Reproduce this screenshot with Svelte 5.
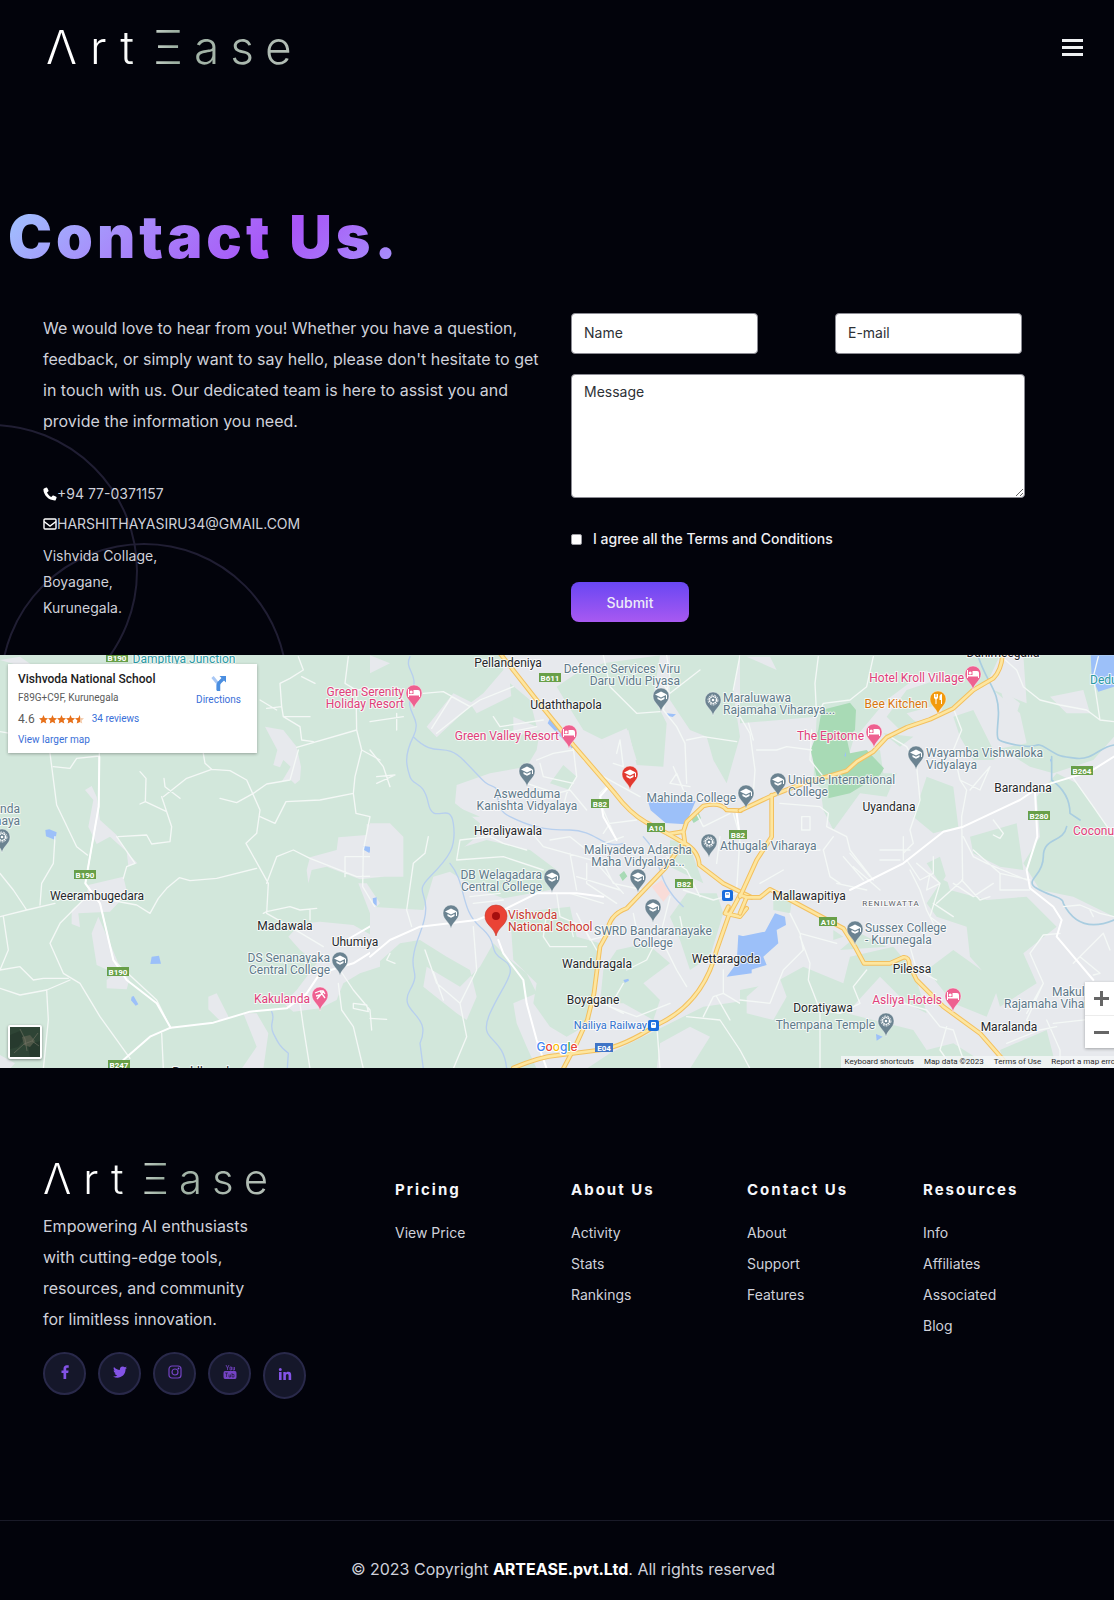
<script>
  const columns = [
    { title: 'Pricing', links: ['View Price'] },
    { title: 'About Us', links: ['Activity', 'Stats', 'Rankings'] },
    { title: 'Contact Us', links: ['About', 'Support', 'Features'] },
    { title: 'Resources', links: ['Info', 'Affiliates', 'Associated', 'Blog'] }
  ];

  // Map labels: kind, x, vertical centre of the first line, anchor, lines
  const labels = [
    ['teal', 184, 4, 'middle', 'Dampitiya Junction'],
    ['town', 97, 241, 'middle', 'Weerambugedara'],
    ['town', 285, 271, 'middle', 'Madawala'],
    ['town', 355, 287, 'middle', 'Uhumiya'],
    ['slate', 330, 303, 'end', 'DS Senanayaka', 'Central College'],
    ['pink', 310, 344, 'end', 'Kakulanda'],
    ['pink', 404, 37, 'end', 'Green Serenity', 'Holiday Resort'],
    ['slate', 20, 154, 'end', 'anda', 'naya'],
    ['town', 204, 417, 'middle', 'Buddhagala'],
    ['town', 508, 8, 'middle', 'Pellandeniya'],
    ['slate', 680, 14, 'end', 'Defence Services Viru', 'Daru Vidu Piyasa'],
    ['town', 566, 50, 'middle', 'Udaththapola'],
    ['pink', 559, 81, 'end', 'Green Valley Resort'],
    ['slate', 527, 139, 'middle', 'Aswedduma', 'Kanishta Vidyalaya'],
    ['town', 508, 176, 'middle', 'Heraliyawala'],
    ['slate', 736, 143, 'end', 'Mahinda College'],
    ['slate', 638, 195, 'middle', 'Maliyadeva Adarsha', 'Maha Vidyalaya...'],
    ['slate', 542, 220, 'end', 'DB Welagadara', 'Central College'],
    ['red', 508, 260, 'start', 'Vishvoda', 'National School'],
    ['slate', 653, 276, 'middle', 'SWRD Bandaranayake', 'College'],
    ['town', 597, 309, 'middle', 'Wanduragala'],
    ['town', 726, 304, 'middle', 'Wettaragoda'],
    ['town', 593, 345, 'middle', 'Boyagane'],
    ['blue', 647, 370, 'end', 'Nailiya Railway'],
    ['slate', 720, 191, 'start', 'Athugala Viharaya'],
    ['slate', 723, 43, 'start', 'Maraluwawa', 'Rajamaha Viharaya...'],
    ['pink', 964, 23, 'end', 'Hotel Kroll Village'],
    ['orange', 928, 49, 'end', 'Bee Kitchen'],
    ['pink', 864, 81, 'end', 'The Epitome'],
    ['slate', 926, 98, 'start', 'Wayamba Vishwaloka', 'Vidyalaya'],
    ['slate', 788, 125, 'start', 'Unique International', 'College'],
    ['town', 889, 152, 'middle', 'Uyandana'],
    ['town', 1023, 133, 'middle', 'Barandana'],
    ['pink', 1073, 176, 'start', 'Coconut'],
    ['teal', 1090, 25, 'start', 'Deduru'],
    ['town', 809, 241, 'middle', 'Mallawapitiya'],
    ['area', 891, 247, 'middle', 'RENILWATTA'],
    ['slate', 865, 273, 'start', 'Sussex College', '- Kurunegala'],
    ['town', 912, 314, 'middle', 'Pilessa'],
    ['pink', 942, 345, 'end', 'Asliya Hotels'],
    ['town', 823, 353, 'middle', 'Doratiyawa'],
    ['slate', 875, 370, 'end', 'Thempana Temple'],
    ['town', 1009, 372, 'middle', 'Maralanda'],
    ['slate', 1052, 337, 'start', 'Makulana'],
    ['slate', 1004, 349, 'start', 'Rajamaha Viharaya'],
    ['town', 1003, -2, 'middle', 'Dahimeegalla']
  ].map(([kind, x, y, anchor, ...lines]) => ({ kind, x, y, anchor, lines }));

  const pins = [
    ['temple', 2, 182], ['school', 340, 305], ['food', 320, 340, 'pink'],
    ['bed', 414, 38, 'pink'], ['bed', 569, 78, 'pink'], ['school', 527, 116],
    ['school', 661, 41], ['temple', 713, 45], ['school', 630, 119, 'red'],
    ['school', 746, 138], ['temple', 709, 187], ['school', 552, 222],
    ['school', 638, 222], ['school', 653, 252], ['school', 451, 258],
    ['bed', 973, 19, 'pink'], ['fork', 938, 44, 'orange'], ['bed', 874, 77, 'pink'],
    ['school', 916, 99], ['school', 778, 126], ['school', 855, 274],
    ['bed', 953, 341, 'pink'], ['temple', 886, 366]
  ].map(([icon, x, y, tone = 'slate']) => ({ icon, x, y, tone }));

  const shields = [
    ['B190', 117, 3], ['B190', 85, 220], ['B190', 118, 317], ['B247', 119, 410],
    ['B611', 550, 23], ['B82', 600, 149], ['A10', 656, 173], ['B82', 738, 180],
    ['B82', 684, 229], ['E04', 604, 393], ['B264', 1082, 116], ['B280', 1039, 161],
    ['A10', 828, 267]
  ];

  const stations = [[727, 240], [653, 370]];

  let name = $state('');
  let email = $state('');
  let message = $state('');
  let agreed = $state(false);
</script>

<div class="page">
  <header class="topbar">
    <a class="logo" href="#home" aria-label="ArtEase"><span>Λrt</span><span class="tail">Ξase</span></a>
    <button class="menu" type="button" aria-label="Open menu">
      <span></span><span></span><span></span>
    </button>
  </header>

  <main>
    <section class="contact">
      <div class="rings" aria-hidden="true"><i class="ring one"></i><i class="ring two"></i></div>
      <h1>Contact Us.</h1>
      <div class="halves">
        <div class="intro">
          <p>We would love to hear from you! Whether you have a question, feedback, or simply want to say hello, please don't hesitate to get in touch with us. Our dedicated team is here to assist you and provide the information you need.</p>
          <address>
            <a href="tel:+94770371157">
              <svg viewBox="0 0 14 14" width="14" height="14" aria-hidden="true"><path fill="#fff" d="M1 1.6 3.2.5c.5-.2.9 0 1.1.4l1.2 2.6c.2.4 0 .8-.3 1L4 5.500c.8 1.900 2.300 3.500 4.300 4.500l1.200-1.300c.3-.3.7-.4 1-.2l2.700 1.300c.4.2.5.6.4 1l-.9 2.100c-.1.4-.5.7-1 .6C5.600 13.300.700 8.400.400 2.600c0-.4.200-.8.600-1z"/></svg>
              +94 77-0371157
            </a>
            <a href="mailto:harshithayasiru34@gmail.com">
              <svg viewBox="0 0 14 14" width="14" height="14" aria-hidden="true"><rect x="1" y="2" width="12" height="10" rx="1" fill="none" stroke="#fff" stroke-width="1.400"/><path d="m1 4.500 6 4.500 6-4.500" fill="none" stroke="#fff" stroke-width="1.400"/></svg>
              HARSHITHAYASIRU34@GMAIL.COM
            </a>
            <div class="street">Vishvida Collage,<br />Boyagane,<br />Kurunegala.</div>
          </address>
        </div>

        <form onsubmit={(e) => e.preventDefault()}>
          <div class="pair">
            <input type="text" placeholder="Name" aria-label="Name" bind:value={name} />
            <input type="email" placeholder="E-mail" aria-label="E-mail" bind:value={email} />
          </div>
          <textarea placeholder="Message" aria-label="Message" bind:value={message}></textarea>
          <label class="agree"><input type="checkbox" bind:checked={agreed} />I agree all the Terms and Conditions</label>
          <button class="submit" type="submit">Submit</button>
        </form>
      </div>
    </section>

    <section class="map" aria-label="Map">
      <svg class="canvas" viewBox="0 0 1114 413" preserveAspectRatio="xMidYMid slice">
        <rect width="1114" height="413" fill="#d2e7db" />
        <g transform="translate(0 -5) scale(.33333)">
          <!-- western sheet -->
          <g>
            <g class="urban">
              <path d="M795 230 850 240 890 290 903 350 900 390 885 402 870 388 845 395 872 350 850 330 840 352 820 345 832 300Z" />
              <path d="M255 420 275 408 290 440 300 510 350 555 375 600 412 640 385 648 380 605 330 560 290 582 265 530 280 450Z" />
              <path d="M265 705 370 680 382 730 330 785 235 790 240 832 215 822 215 780 260 740Z" />
              <path d="M275 850 295 800 330 880 355 940 388 990 380 1018 320 1015 320 990 345 970 290 945Z" />
              <path d="M930 622 1010 600 1015 562 1100 555 1100 522 1150 530V680L1080 688 980 650 935 660 925 700 920 660Z" />
              <path d="M865 860 900 822 960 815 1060 825 1140 870V950L1080 970 1030 1000 1010 1050 960 1075 880 1085 850 1060 890 1020 950 940 900 900Z" />
              <path d="M625 1040 650 1030 688 1105 660 1112 625 1078ZM730 1090 770 1090 805 1150 790 1256H725L770 1190ZM0 30 60 20 110 55 70 50ZM0 1215 45 1240 30 1256H0Z" />
              <path d="M1075 700 1100 700 1140 760 1110 790Z" />
            </g>
            <g class="water">
              <path d="m136 540 12-2 22 9-4 23-28-11zM455 920l22-3 6 24-32 1zM395 1040l6-2 14 25-8 4-14-16zM1090 588l24 3-6 18-16-9zM1118 745l12-3v26l-10-8z" />
            </g>
            <g class="stream"><path d="M815 1085C828 1110 805 1120 820 1150S840 1190 865 1210L862 1256" /></g>
            <g class="lane">
              <path d="M0 245 60 255M150 310 170 465 230 590 262 615M298 310 296 470 256 700 300 760 340 930 470 1050 512 1135M160 350 210 355 230 325 298 318M610 310 615 340 635 358 M490 440 560 385 635 358 690 362 740 390 780 480 770 550 738 580 805 700 800 790 870 830 970 890M485 440 500 485 515 530 510 575 455 582 440 555 355 560M420 365 438 385 436 455 420 462M436 455 500 485M492 385 495 410 540 445M660 445 710 458 760 430 800 402 870 390 895 300M780 500 825 520 858 455 960 450 1060 430 1065 380 1085 300 1070 240 890 292M1070 240 1068 120 1035 100 1045 20M895 20 910 60 870 85 840 100 845 170 800 175 M905 80 945 100M845 170 850 200 930 200M780 150 830 180M850 200 900 230 905 270 940 275M1068 120 1140 115M1085 300 1140 330M1060 430 1068 490 1110 500 1090 600 1088 710 1130 780M800 700 830 620 880 600 930 625 1070 680 1140 678M1035 680V620H1140M380 650 405 640 350 560M370 685 380 650M770 655 650 685 570 692 538 683 500 715 475 745 450 790 410 765 330 750M165 760 80 780 0 800M80 780 40 720 0 670M120 765 125 700 160 640 165 560M10 800 25 900 0 960 60 950 100 990 130 985 205 985M255 745 180 820 150 880 190 970 240 1000 300 1100 390 1225M210 990 140 1020 60 1035 0 1015M140 1020 145 1110 130 1256M790 790 800 785 870 770 900 780 950 775M930 780 930 810M485 1150 490 1256M900 1060 910 1130 930 1256M1015 1000 1025 1080 1060 1130 1090 1256M1060 1060 1100 1065 1105 1085 1060 1075ZM1020 960 1060 1020 1110 1080 1115 1140" />
            </g>
            <g class="road">
              <path d="M298 320 296 470 256 700 300 760 340 930 380 990 470 1060 512 1133M370 1230 450 1160 512 1133 640 1118 750 1085 860 1075 920 1030 960 970 1060 940 1140 890M1040 870 1140 812" />
            </g>
          </g>

          <!-- central sheet -->
          <g transform="translate(1110 0)">
            <g class="urban">
              <path d="M395 16 400 60 340 130 300 160 320 190 440 130 480 180 430 200 430 260 510 240 500 300 470 350 360 370 260 405 255 460 330 520 320 560 260 610 400 600 540 680 540 720 400 745 310 710 240 665 190 680 160 780 0 770V960L90 880 150 870 230 920 300 960 320 1040 290 1110 260 1090 160 1010 170 950 270 1010 330 950 370 880 420 930 470 970 500 1030 430 1060 440 1120 470 1190 500 1256H2232V16Z" />
              <path d="M170 230 250 130 310 160 200 262ZM0 520 60 520 100 560 100 680 0 680ZM0 16 60 40 0 70Z" />
            </g>
            <g class="land">
              <path d="M620 70 700 40 870 16 850 140 890 220 880 350 800 345 775 240 700 270 640 240 590 160 560 110Z" />
              <path d="M900 16H1110L1090 130 1110 260 1070 400 1030 330 1010 260 960 240 900 150Z" />
              <path d="M420 100 480 150 500 230 430 200ZM580 345 620 380 600 420 540 400ZM260 470 330 500 260 500Z" />
              <path d="M420 790 600 770 620 860 690 880 660 1120 590 1160 540 1130 490 1060 500 1000 430 930Z" />
              <path d="M740 900 830 880 900 940 820 1000 870 1050 850 1110 760 1060 690 1060 700 960Z" />
              <path d="M950 730 1040 730 1060 790 1020 920 960 960 930 870 900 800Z" />
              <path d="M650 1256 720 1210 860 1140 1000 1070 1140 1050V1256ZM250 600 350 570 480 600 560 660 520 700 430 640 300 640Z" />
              <path d="M900 570 960 580 970 620 1000 700 900 650Z" />
            </g>
            <g class="urban"><path d="M870 1180 960 1130 1020 1160 960 1256H860ZM690 270 770 235 800 330 720 330Z" /></g>
            <path fill="#a8dab5" d="m960 500 25-15 8 20-22 14zM748 675l14-12 10 16-14 14z" />
            <path fill="#f9dcd8" d="m845 710 30-20 25 40-20 25z" />
            <g class="water">
              <path d="m832 448 30 5h115l-30 70-60-4-45-38zM540 205l20 10 60 75-15 5-72-75zM890 190l28 3-10 8-16-4zM1105 855l40 10v105l-75 10 30-40zM760 990l15-4 2 6-12 6z" />
            </g>
            <g class="stream">
              <path d="M120 20C100 60 150 70 125 130S160 200 130 260 110 350 120 380 160 390 175 460 240 450 250 520 240 620 180 680 200 720 150 850 160 950 120 1020 190 1090 150 1180L160 1256M130 260C200 330 220 270 280 330S340 400 370 410 360 470 420 500 520 540 600 540 700 600 760 580M240 640C290 700 270 780 330 830S350 900 400 930 400 1000 360 1090 400 1150 410 1256M820 560C880 620 850 690 940 770" />
            </g>
            <g class="lane">
              <path d="M160 130 220 125 300 170 330 150 430 110M185 235 245 140 300 170 200 250M80 190V240M0 215 100 200M20 400 75 375 20 380M0 300 40 350 60 410M175 560 165 610 130 640 110 780 125 830M370 200 390 230 520 210M400 250 500 230M700 16 720 110 800 190 870 185M890 16 900 80 880 180 920 230 945 280 950 400M950 270 1000 260 1100 275M1110 16 1090 120M1100 130 1130 200 1150 270M870 90 900 130 990 60M500 330 550 310 610 300M610 295 620 380 590 430 580 470M510 340 520 380 610 400M470 400 560 430 600 420 650 480M715 405 690 430 700 480 735 560M640 330 700 380 810 440M740 310 750 270 760 350 730 340M700 550 720 520 800 510M540 570 600 560 650 600 760 560M470 530 520 590 700 640 730 700 820 720M600 610 620 720M650 640 650 700 740 760M680 640 760 730M620 680 750 720M600 730 700 760M560 730 570 800 640 830 680 900M470 600 400 580 360 560 270 570 260 630 400 620 520 660M390 730 300 740M310 760 400 750M520 860 540 890 650 890M530 790 520 860M620 790 660 870 700 860M790 790 800 840 870 840M900 740 870 860 920 960 950 1010M940 720 1030 750 1100 730M890 620 950 660 990 740M860 870 830 930 770 960M760 1000 720 1070 800 1100 900 1060M700 1060 760 1090M1000 1100 1030 1040 1060 1030 1060 960M1060 1030 1110 1060 1140 1030M1040 1040 1080 1110M860 1120 870 1256M950 1100 1050 1110 1110 1200M165 900 200 1000 270 1060 320 960M60 910 50 930 75 940M190 965 220 1050M270 1060 290 1160 250 1256M0 1105 50 1108M310 830 320 960M980 490 1000 530 1080 490M1090 490 1110 560 1100 720M1050 560 1040 640M960 410 900 400 920 370 940 420 910 350M930 800 940 850M600 820 610 860" />
            </g>
            <g class="road">
              <path d="M0 920 60 870 150 830 320 810 410 775 500 730 620 730 700 740M385 870 400 910 460 990 470 1060 500 1170 530 1256M720 405 690 440 700 500 740 570M1100 490 1110 560" />
            </g>
            {#each ['casing', 'core'] as layer}
              <g class={layer}>
                <path d="M390 10 500 150 610 285 735 430Q780 490 830 518L895 552 940 578Q985 600 988 645L1060 700 1145 742" />
                <path d="M895 552 940 545 950 515 1000 468Q1050 455 1070 480L1112 482M940 545 945 580" />
                <path d="M940 578 885 655 770 775Q715 795 712 850L690 890 672 1030 652 1110 620 1180 580 1256" />
                <path d="M430 1254Q510 1220 560 1216L690 1200Q760 1190 860 1125 1000 1060 1040 900L1075 800 1110 735M1075 770 1065 790 1110 800 1130 775" />
              </g>
            {/each}
          </g>

          <!-- eastern sheet -->
          <g transform="translate(2220 0)">
            <g class="land">
              <path d="M0 16H400L780 16 750 80 700 120 600 200 480 240 440 200 500 120 590 90 560 60 440 150 340 270 290 440 220 400 230 200 0 220Z" />
              <path d="M850 16H1122V260L1060 330 940 370 870 350 790 300 760 330 700 330 660 260 640 200 700 180 760 300 860 280 840 190 760 120 860 160Z" />
              <path d="M230 330 420 300 430 370 470 370 440 440 360 430 280 540 250 480Z" />
              <path d="M560 380 640 410 655 530 580 550 520 500 540 440ZM950 370 1010 400 1122 560V800L1000 740 900 720 850 640 900 560 890 440Z" />
              <path d="M690 560 830 520 850 660 780 650 700 610ZM430 250 520 260 480 290Z" />
              <path d="M560 760 600 700 560 640 600 620 630 720 740 750 860 740 950 830 850 910 890 1000 780 1070 760 1000 690 920 680 830 590 800ZM640 900 780 1000 740 1100 640 1060 560 960Z" />
              <path d="M0 1020 100 1000 190 950 310 1000 330 920 460 890 520 960 560 1090 500 1060 420 980 320 1090 520 1140 560 1200 640 1180 760 1256H0ZM780 1200 920 1140 950 1256H800ZM300 900 360 850 440 890Z" />
              <path d="M100 740 160 720 150 790 100 780ZM280 840 310 860 280 870Z" />
            </g>
            <g class="urban"><path d="M780 110 840 160 830 190 790 150ZM500 190 610 160 590 250 520 210ZM610 690 660 610 720 740ZM20 1040 110 960 140 1040 100 1110 20 1090ZM930 140 1030 120 1050 190 980 190ZM20 20H90L110 60Z" /></g>
            <path fill="#a8dab5" d="M245 180 330 158 348 180 345 240 320 265 330 310 380 300 432 355 420 375 330 430 265 445 265 390 230 380 212 300 235 240Z" />
            <g class="water">
              <path d="M1052 16H1122V110L1075 125 1055 80ZM105 790 135 800 138 825 110 840 115 880 70 920 80 945 0 970V860L75 845ZM408 1152 428 1160 410 1172ZM930 330 936 322V344ZM318 305V320L313 318Z" />
            </g>
            <g class="stream wide">
              <path d="M715 20C740 100 780 120 775 200S760 270 830 285 880 270 920 295 960 320 1010 325 1080 290 1122 285M935 320 935 390Q990 430 990 490L1020 510M980 530C970 580 910 560 910 620S850 690 890 715 970 740 970 760C1000 820 1050 840 1122 810" />
            </g>
            <g class="lane">
              <path d="M235 20 225 100 230 200 250 160 330 150 380 110 400 20M0 200 30 250 45 360 40 430M50 300 110 300 140 290 215 300M215 240 210 330 250 380M780 16 830 60 850 110 900 150 960 165 1040 180 1080 210 1122 215M1075 20 1060 80 1080 210M640 175 665 240 640 300 660 390 680 420 665 500 668 690 590 760M450 260 500 290 530 350 540 450 510 540 520 580 490 610M660 390 720 420 750 350 690 420M185 500H210V540H185ZM120 460 240 470 265 490 260 530 320 560 330 600 400 690M280 560 250 600 270 680 300 700M140 580 180 600 240 600M60 700 130 660M310 620 370 690M330 610 390 680M290 700 380 720M340 650 420 720M420 600H510M490 560 490 630M420 630H480M500 630 540 690 580 670 580 620M530 640 600 700 570 800 610 830M640 700 700 740 760 700M580 760 640 800M670 560 700 620 740 640 860 690M700 600 780 670 870 690M510 660 540 720 560 780 580 820M665 690 720 750 750 740M780 670 780 720 870 720M760 510 790 550 780 565 760 555M1000 385 1060 470 1122 560M970 770 1020 765 1080 790 1122 800M1060 800 1050 780M960 850 910 855 870 910 910 1000 860 1090M1020 920 1080 970 1060 975M1000 940 1090 850 1110 900M180 850 190 900 130 960 90 1060 0 1050M180 860 210 940 205 990 240 1080 240 1256M150 790 180 850 290 880M380 960 340 1010 360 1060 300 1090 240 1080M510 890 530 960 590 990M490 1060 560 1080 600 1130 640 1140 660 1200 680 1256M620 1130 600 1200 640 1256M800 1180 900 1140 950 1130M890 1140 860 1110 910 1000M920 1110 960 1200 960 1256M940 1120 1122 1100M0 1200 30 1256M570 670 560 720 600 700" />
            </g>
            <g class="road">
              <path d="M1122 320 1050 365 900 410 840 450 670 530 610 545 490 640 330 720M885 425 892 560 860 660 870 715 940 770 965 810 950 860 1060 990" />
            </g>
            {#each ['casing', 'core'] as layer}
              <g class={layer}>
                <path d="M0 482 100 435 190 400 260 380 320 362 350 335 400 305 440 262 500 232 570 208 640 175 700 120 760 85Q785 60 788 10" />
                <path d="M0 740 50 630 95 560V435" />
                <path d="M0 790 20 742 60 742 90 718 160 755 310 835 345 890 372 940 450 940 490 922Q508 920 508 945L530 990 610 1070 720 1150 790 1230M0 735 20 742" />
              </g>
            {/each}
          </g>
        </g>

        {#each shields as [code, x, y]}
          <g transform="translate({x} {y})">
            <rect x={code.length > 3 ? -11 : -9} y="-5" width={code.length > 3 ? 22 : 18} height="9" fill={code === 'E04' ? '#3f74c6' : '#689f48'} />
            <text class="shield" y="3" text-anchor="middle">{code}</text>
          </g>
        {/each}

        {#each stations as [x, y]}
          <g transform="translate({x} {y})">
            <rect x="-5" y="-5" width="11" height="11" rx="2" fill="#1a6ddd" />
            <rect x="-2" y="-3" width="5" height="6" rx="1" fill="#fff" />
            <path d="M-1-1H2M-2 4-1 3M3 4 2 3" stroke="#1a6ddd" />
          </g>
        {/each}

        {#each labels as label}
          <text class="label {label.kind}" text-anchor={label.anchor}>
            {#each label.lines as line, i}
              <tspan x={label.x} y={label.y + 4 + i * 12}>{line}</tspan>
            {/each}
          </text>
        {/each}

        {#each pins as pin}
          <g class="pin {pin.tone}" transform="translate({pin.x} {pin.y})">
            <path class="drop" d="M0 16C-1 9-8 7-8 0A8 8 0 1 1 8 0C8 7 1 9 0 16Z" />
            {#if pin.icon === 'school'}
              <path fill="#fff" d="M0-4.500 6-1.500 0 1.500-6-1.500ZM-3.500 1V3L0 4.800 3.500 3V1L0 2.800ZM5-1H6V3H5Z" />
            {:else if pin.icon === 'bed'}
              <path fill="#fff" d="M-6-4H-5V1H-.5V-3H4Q6-3 6-1V4H5V2.500H-5V4H-6Z" /><circle cx="-2.800" cy="-1" r="1.500" fill="#fff" />
            {:else if pin.icon === 'fork'}
              <path fill="#fff" d="M-4-5H-3V-2H-2.500V-5H-1.500V-2H-1V-5H0V-1L-1.500.500V5H-2.500V.500L-4-1ZM4-5V5H3V1H1.500V-3Q2-5 4-5Z" />
            {:else if pin.icon === 'food'}
              <path fill="none" stroke="#fff" stroke-width="1.300" d="M-5-2 0-4 5 3M-4 1 0 0M-3 4 4-4M0-4H3L5-1" />
            {:else}
              <circle r="3.500" fill="none" stroke="#fff" stroke-width="1.600" stroke-dasharray="1.600 .6" /><circle r="5" fill="none" stroke="#fff" stroke-width=".8" stroke-dasharray="2 1" /><circle r="1.300" fill="#fff" />
            {/if}
          </g>
        {/each}

        <g transform="translate(496 262)">
          <path d="M0 19C-2 10-11 8-11-1A11 11 0 1 1 11-1C11 8 2 10 0 19Z" fill="#ea4335" stroke="#c5372c" stroke-width=".6" />
          <circle cy="-1" r="4" fill="#a50e0e" />
        </g>

        <text class="google" x="557" y="396" text-anchor="middle"><tspan fill="#4285f4">G</tspan><tspan fill="#ea4335">o</tspan><tspan fill="#fbbc05">o</tspan><tspan fill="#4285f4">g</tspan><tspan fill="#34a853">l</tspan><tspan fill="#ea4335">e</tspan></text>
      </svg>

      <div class="place">
        <div class="facts">
          <strong>Vishvoda National School</strong>
          <span class="where">F89G+C9F, Kurunegala</span>
          <span class="rating">
            <b>4.6</b>
            <svg width="45" height="9" viewBox="0 0 45 9" aria-label="4.6 stars">
              {#each [0, 9, 18, 27] as x}
                <path transform="translate({x} 0)" fill="#e7711b" d="M4.500 0 5.800 3 9 3.300 6.600 5.400 7.300 8.600 4.500 6.900 1.700 8.600 2.400 5.400 0 3.300 3.200 3Z" />
              {/each}
              <path transform="translate(36 0)" fill="#f3c9a8" d="M4.500 0 5.800 3 9 3.300 6.600 5.400 7.300 8.600 4.500 6.900Z" />
              <path transform="translate(36 0)" fill="#e7711b" d="M5 0V7L1.700 8.600 2.400 5.400 0 3.300 3.200 3Z" />
            </svg>
            <a href="#reviews">34 reviews</a>
          </span>
          <a href="#map">View larger map</a>
        </div>
        <a class="directions" href="#directions">
          <svg width="16" height="16" viewBox="0 0 16 16" aria-hidden="true"><path d="M1.500 2 6.500 8V15" fill="none" stroke="#a9c8f5" stroke-width="3" /><path d="M7.500 16V10Q7.500 8 9 7L12 4" fill="none" stroke="#4a8ee0" stroke-width="3.500" /><path d="M8.500 1H15V7.500Z" fill="#4a8ee0" /></svg>
          Directions
        </a>
      </div>

      <button class="satellite" type="button" aria-label="Show satellite imagery">
        <svg width="30" height="30" viewBox="0 0 30 30" aria-hidden="true">
          <rect width="30" height="30" fill="#2e4435" />
          <path d="M0 8 10 4 14 12 8 20 0 22ZM18 18 30 14V30H20Z" fill="#273a2e" />
          <path d="M12 10 20 8 25 14 20 20 14 18Z" fill="#4f5848" />
          <path d="M4 26 14 17 22 14 28 6M10 2 15 12 17 24M22 14 29 19" stroke="#737465" stroke-width=".6" fill="none" />
        </svg>
      </button>

      <div class="zoom">
        <button type="button" aria-label="Zoom in"><svg width="15" height="15" viewBox="0 0 15 15" aria-hidden="true"><path d="M0 7.500H15M7.500 0V15" stroke="#666" stroke-width="3" /></svg></button>
        <button type="button" aria-label="Zoom out"><svg width="15" height="15" viewBox="0 0 15 15" aria-hidden="true"><path d="M0 7.500H15" stroke="#666" stroke-width="3" /></svg></button>
      </div>

      <div class="credits">
        <a href="#shortcuts">Keyboard shortcuts</a>
        <span>Map data ©2023</span>
        <a href="#terms">Terms of Use</a>
        <a href="#report">Report a map error</a>
      </div>
    </section>
  </main>

  <footer>
    <div class="links">
      <div class="brand">
        <a class="logo small" href="#home" aria-label="ArtEase"><span>Λrt</span><span class="tail">Ξase</span></a>
        <p>Empowering AI enthusiasts with cutting-edge tools, resources, and community for limitless innovation.</p>
        <div class="social">
          <a href="#facebook" aria-label="Facebook"><svg viewBox="0 0 14 14" width="14" height="14"><path d="M5.500 14V8H3.500V5.500H5.500V3.800C5.500 1.500 6.800.300 8.800.300H10.700V2.700H9.400C8.500 2.700 8.200 3.100 8.200 3.900V5.500H10.600L10.200 8H8.200V14Z" /></svg></a>
          <a href="#twitter" aria-label="Twitter"><svg viewBox="0 0 14 14" width="14" height="14"><path d="M14 2.700c-.5.300-1 .4-1.600.5.600-.4 1-.9 1.200-1.600-.5.300-1.200.600-1.800.700A2.900 2.900 0 0 0 6.900 4.900C4.500 4.800 2.400 3.600 1 1.900c-.8 1.400-.3 3 .9 3.800-.5 0-.9-.1-1.300-.4 0 1.500 1 2.600 2.300 2.900-.4.100-.8.100-1.300 0 .4 1.200 1.400 2 2.700 2A5.800 5.800 0 0 1 0 11.400c4.900 3 12.600.5 12.600-7.300.5-.4 1-.8 1.400-1.400z" /></svg></a>
          <a href="#instagram" aria-label="Instagram"><svg viewBox="0 0 14 14" width="14" height="14"><g fill="none" stroke="#7443c4" stroke-width="1.200"><rect x="1" y="1" width="12" height="12" rx="3" /><circle cx="7" cy="7" r="3" /></g><circle cx="10.500" cy="3.500" r=".9" /></svg></a>
          <a href="#youtube" aria-label="YouTube"><svg viewBox="0 0 14 14" width="14" height="14"><path fill="#7443c4" d="M2 6H12Q13.500 6 13.500 8V12Q13.500 14 12 14H2Q.5 14 .5 12V8Q.5 6 2 6Z" /><path d="M3 0 4.500 3V5M6 0 4.500 3M7 2V5H8.500V2H7M10 2V5H11.500V2" fill="none" stroke="#7443c4" stroke-width=".8" /><path d="M2 8H5M3.500 8V12M6 9.500V12H7.500V9.500M9 8V12H11V9.500H9" stroke="#15172a" stroke-width=".6" fill="none" /></svg></a>
          <a class="tall" href="#linkedin" aria-label="LinkedIn"><svg viewBox="0 0 14 14" width="14" height="14"><path d="M1 5H3.600V13H1ZM2.300 1a1.500 1.500 0 1 1 0 3 1.500 1.500 0 0 1 0-3ZM5.300 5H7.800V6.100C8.300 5.300 9.100 4.800 10.300 4.800 12.800 4.800 13.200 6.500 13.200 8.600V13H10.600V9.100C10.600 8.100 10.600 7 9.300 7S7.900 8 7.900 9.100V13H5.300Z" /></svg></a>
        </div>
      </div>
      {#each columns as column}
        <nav aria-label={column.title}>
          <h2>{column.title}</h2>
          <ul>
            {#each column.links as link}
              <li><a href="#{link.toLowerCase().replace(' ', '-')}">{link}</a></li>
            {/each}
          </ul>
        </nav>
      {/each}
    </div>
    <p class="copyright">© 2023 Copyright <strong>ARTEASE.pvt.Ltd</strong>. All rights reserved</p>
  </footer>
</div>

<style>
  :global(body) {
    background: #02030b;
  }
  .page {
    background: #02030b;
    color: #cfd1da;
    font-family: Inter, 'Open Sans', sans-serif;
    font-size: 16px;
    line-height: 31px;
    overflow: hidden;
  }
  a {
    color: inherit;
    text-decoration: none;
  }
  p,
  ul,
  h1,
  h2 {
    margin: 0;
    padding: 0;
  }
  button,
  input,
  textarea {
    font-family: inherit;
    box-sizing: border-box;
  }

  .topbar {
    display: flex;
    justify-content: space-between;
    align-items: center;
    padding: 23px 31px 23px 46px;
  }
  .logo {
    display: flex;
    width: max-content;
    gap: 6px;
    font-size: 46px;
    line-height: 48px;
    font-weight: 300;
    letter-spacing: 13px;
    background: linear-gradient(90deg, #fff 30%, #9db0a2 50%, #b5bfb8);
    -webkit-background-clip: text;
    background-clip: text;
    color: transparent;
  }
  .logo .tail {
    letter-spacing: 11px;
  }
  .logo.small {
    font-size: 42px;
    line-height: 44px;
    letter-spacing: 12px;
  }
  .logo.small .tail {
    letter-spacing: 10px;
  }
  .menu {
    display: flex;
    flex-direction: column;
    gap: 4px;
    padding: 0;
    border: 0;
    background: none;
  }
  .menu span {
    width: 21px;
    height: 3px;
    background: #eef0f2;
  }

  .contact {
    position: relative;
    padding: 108px 15px 33px 43px;
  }
  .rings {
    position: absolute;
    inset: 0;
    overflow: hidden;
  }
  .ring {
    position: absolute;
    border: 2px solid #201e33;
    border-radius: 50%;
  }
  .ring.one {
    left: -156px;
    bottom: -63px;
    width: 290px;
    height: 290px;
  }
  .ring.two {
    left: 0;
    bottom: -176px;
    width: 284px;
    height: 284px;
  }
  h1 {
    position: relative;
    width: max-content;
    margin: 0 0 41px -35px;
    font-size: 59px;
    line-height: 70px;
    font-weight: 900;
    letter-spacing: 4px;
    background: linear-gradient(135deg, #9fc6ff, #a78bfa 32%, #a855f7 67%, #a78bfa 94%);
    -webkit-background-clip: text;
    background-clip: text;
    color: transparent;
  }
  .halves {
    position: relative;
    display: grid;
    grid-template-columns: 1fr 1fr;
  }
  .intro p {
    margin-right: 16px;
  }
  address {
    display: flex;
    flex-direction: column;
    align-items: flex-start;
    margin-top: 42px;
    font-size: 14px;
    line-height: 26px;
    font-style: normal;
  }
  address a {
    display: flex;
    align-items: center;
    line-height: 30px;
  }
  .street {
    margin-top: 4px;
  }

  .pair {
    display: grid;
    grid-template-columns: 1fr 1fr;
    margin-bottom: 20px;
  }
  .pair input {
    width: 71%;
    height: 41px;
    padding: 0 12px 2px;
  }
  .pair input,
  textarea {
    border: 1px solid #8b8b93;
    border-radius: 4px;
    background: #fff;
    color: #212529;
    font-size: 14px;
  }
  textarea {
    display: block;
    width: 86%;
    height: 124px;
    padding: 7px 12px;
    line-height: 20px;
  }
  .pair input::placeholder,
  textarea::placeholder {
    color: #2d3136;
    opacity: 1;
  }
  .agree {
    display: flex;
    align-items: center;
    gap: 11px;
    margin: 31px 0 33px;
    color: #f0f0f4;
    font-size: 14px;
    line-height: 20px;
    font-weight: 500;
  }
  .agree input {
    appearance: none;
    width: 11px;
    height: 11px;
    margin: 0;
    border: 1px solid #9a9aa0;
    border-radius: 2px;
    background: #fff;
  }
  .agree input:checked {
    background: #8b5cf6;
  }
  .submit {
    display: block;
    width: 118px;
    height: 40px;
    border: 0;
    border-radius: 8px;
    background: linear-gradient(#6947f3, #a859f1);
    color: #eceaf8;
    font-size: 14px;
    font-weight: 500;
  }

  .map {
    position: relative;
    height: 413px;
    overflow: hidden;
    font-family: Roboto, sans-serif;
  }
  .canvas {
    display: block;
    width: 100%;
    height: 100%;
  }
  .urban {
    fill: #e7e9ed;
  }
  .land {
    fill: #d2e7db;
  }
  .water {
    fill: #9cc0f9;
  }
  .stream,
  .lane,
  .road,
  .casing,
  .core {
    fill: none;
    stroke-linejoin: round;
    stroke-linecap: round;
  }
  .stream {
    stroke: #b7cfee;
    stroke-width: 4;
  }
  .stream.wide {
    stroke: #a9cde0;
    stroke-width: 5;
  }
  .lane {
    stroke: #f4f8f6;
    stroke-width: 4;
  }
  .road {
    stroke: #fff;
    stroke-width: 6;
  }
  .casing {
    stroke: #f3c05f;
    stroke-width: 14;
  }
  .core {
    stroke: #fde6a0;
    stroke-width: 8;
  }
  .label {
    font-size: 12px;
    paint-order: stroke;
    stroke: rgba(255, 255, 255, 0.75);
    stroke-width: 2px;
    stroke-linejoin: round;
  }
  .label.town {
    fill: #26282b;
  }
  .label.slate {
    fill: #60798a;
  }
  .label.pink {
    fill: #e0407a;
  }
  .label.red {
    fill: #c9352d;
  }
  .label.orange {
    fill: #d9760f;
  }
  .label.teal {
    fill: #2b9aa5;
  }
  .label.blue {
    fill: #2f72cf;
    font-size: 11px;
  }
  .label.area {
    fill: #5c6166;
    font-size: 8px;
    letter-spacing: 1px;
  }
  .shield {
    fill: #fff;
    font-size: 8px;
    font-weight: 700;
  }
  .google {
    font-family: Inter, sans-serif;
    font-size: 12px;
    font-weight: 500;
    paint-order: stroke;
    stroke: #fff;
    stroke-width: 2px;
  }
  .pin .drop {
    fill: #6b8391;
    stroke: #fff;
    stroke-width: 0.4;
  }
  .pin.pink .drop {
    fill: #ee6090;
  }
  .pin.red .drop {
    fill: #e2392f;
  }
  .pin.orange .drop {
    fill: #f29a0e;
  }

  .place {
    position: absolute;
    left: 8px;
    top: 9px;
    display: flex;
    justify-content: space-between;
    box-sizing: border-box;
    width: 249px;
    height: 89px;
    padding: 7px 16px 0 10px;
    background: #fff;
    box-shadow: 0 1px 3px rgba(0, 0, 0, 0.3);
    font-size: 10px;
    line-height: 16px;
    color: #5b5b5b;
  }
  .facts {
    display: flex;
    flex-direction: column;
    gap: 5px;
  }
  .facts strong {
    color: #1c1c1c;
    font-size: 12px;
    font-weight: 500;
  }
  .facts .where {
    line-height: 12px;
  }
  .rating {
    display: flex;
    align-items: center;
    gap: 4px;
    margin-top: 2px;
  }
  .rating b {
    font-size: 12px;
    font-weight: 400;
  }
  .rating a {
    margin-left: 4px;
  }
  .place a {
    color: #3a6fd8;
  }
  .directions {
    display: flex;
    flex-direction: column;
    align-items: center;
    gap: 1px;
    margin-top: 4px;
  }
  .satellite {
    position: absolute;
    left: 8px;
    bottom: 9px;
    padding: 0;
    border: 2px solid #fff;
    border-radius: 2px;
    background: #fff;
    box-shadow: 0 1px 3px rgba(0, 0, 0, 0.4);
    line-height: 0;
  }
  .zoom {
    position: absolute;
    right: -4px;
    bottom: 20px;
    width: 33px;
    background: #fff;
    box-shadow: 0 1px 3px rgba(0, 0, 0, 0.3);
  }
  .zoom button {
    display: flex;
    align-items: center;
    justify-content: center;
    width: 33px;
    height: 33px;
    padding: 0;
    border: 0;
    background: none;
  }
  .zoom button + button {
    border-top: 1px solid #ececec;
  }
  .credits {
    position: absolute;
    right: -8px;
    bottom: 0;
    display: flex;
    gap: 10px;
    padding: 0 4px;
    background: rgba(245, 246, 247, 0.8);
    color: #2b2b2b;
    font-size: 8px;
    line-height: 12px;
    white-space: nowrap;
  }

  .links {
    display: grid;
    grid-template-columns: 2fr 1fr 1fr 1fr 1fr;
    padding: 89px 15px 121px 43px;
    border-bottom: 1px solid #191a28;
  }
  .brand p {
    max-width: 220px;
    margin: 10px 0 17px;
  }
  .social {
    display: flex;
    align-items: flex-start;
    gap: 12px;
  }
  .social a {
    display: flex;
    align-items: center;
    justify-content: center;
    box-sizing: border-box;
    width: 43px;
    height: 43px;
    padding-bottom: 3px;
    border: 2px solid #29294a;
    border-radius: 50%;
    background: #15172a;
  }
  .social a.tall {
    height: 47px;
  }
  .social svg {
    fill: #8353e6;
  }
  nav {
    padding-top: 23px;
  }
  h2 {
    margin-bottom: 17px;
    color: #f5f6fa;
    font-size: 15px;
    line-height: 20px;
    font-weight: 700;
    letter-spacing: 2px;
  }
  ul {
    list-style: none;
    font-size: 14px;
    line-height: 31px;
  }
  .copyright {
    padding: 33px 0 15px 12px;
    text-align: center;
  }
  .copyright strong {
    color: #fff;
    font-weight: 700;
  }
</style>
